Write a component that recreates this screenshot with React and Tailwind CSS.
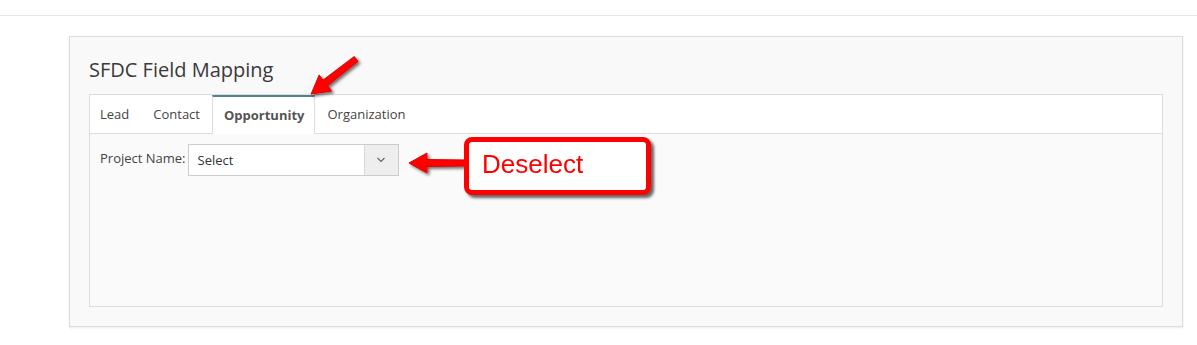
import React from "react";

function Arrow({ x, y, angle, length }) {
  const h = length - 18;
  return (
    <polygon
      transform={`translate(${x} ${y}) rotate(${angle})`}
      points={`0,-3 ${h},-3.5 ${h},-10 ${length},0 ${h},10 ${h},3.5 0,3`}
      fill="#ff0000"
      stroke="#e00000"
      strokeWidth="1"
      strokeLinejoin="round"
    />
  );
}

const tabs = ["Lead", "Contact", "Opportunity", "Organization"];

export default function App() {
  return (
    <div className="relative w-[1197px] h-[345px] bg-white overflow-hidden font-['Open_Sans',sans-serif] text-[#333]">
      <div className="h-[16px] border-b border-[#e6e6e6]" />

      <div className="ml-[69px] mt-[20px] w-[1114px] h-[291px] bg-[#f9f9f9] border border-[#dcdcdc] shadow-[0_1px_2px_rgba(0,0,0,0.08)] px-[19px] pt-[19px]">
        <h2 className="text-[20px] leading-[28px] text-[#3a3a3a] mb-[10px]">SFDC Field Mapping</h2>

        <div className="h-[213px] border border-[#dddddd] flex flex-col">
          <div className="flex h-[39px] bg-white border-b border-[#dddddd] text-[13px]">
            {tabs.map((t, i) =>
              t === "Opportunity" ? (
                <div
                  key={t}
                  className="pl-[11px] pr-[10px] flex items-center font-bold text-[#555] bg-white border-t-2 border-t-[#4f8394] border-x border-x-[#dddddd] -mb-px"
                >
                  {t}
                </div>
              ) : (
                <div
                  key={t}
                  className={`${i === 0 ? "pl-[9px] pr-[11px]" : "px-[11px]"} flex items-center text-[#444] border-t-2 border-x border-transparent`}
                >
                  {t}
                </div>
              )
            )}
          </div>
          <div className="flex-1 bg-[#fafafa] pl-[10px] pt-[10px]">
            <div className="flex items-start gap-[2px]">
              <span className="text-[13px] leading-[28px] text-[#444]">Project Name:</span>
              <div className="flex w-[211px] h-[32px] border border-[#cccccc] bg-white">
                <div className="flex-1 flex items-center pl-[9px] pt-[2px] text-[13px] text-[#333]">Select</div>
                <div className="w-[34px] bg-[#eeeeee] border-l border-[#d6d6d6] flex items-center justify-center">
                  <svg width="10" height="6" viewBox="0 0 10 6">
                    <polyline points="1.5,1 5,4.5 8.5,1" fill="none" stroke="#666" strokeWidth="1.2" />
                  </svg>
                </div>
              </div>
            </div>
          </div>
        </div>
      </div>

      <svg className="absolute left-0 top-0 pointer-events-none" width="1197" height="345">
        <defs>
          <filter id="sh" x="-20%" y="-20%" width="140%" height="140%">
            <feDropShadow dx="2" dy="2" stdDeviation="1.5" floodColor="#000" floodOpacity="0.55" />
          </filter>
        </defs>
        <g filter="url(#sh)">
          <Arrow x={356} y={59} angle={142} length={57} />
          <Arrow x={468} y={163} angle={180} length={59} />
        </g>
      </svg>

      <div className="absolute left-[464px] top-[137px] w-[187px] h-[58px] bg-white border-[5px] border-[#ff0000] rounded-[8px] shadow-[3px_3px_3px_rgba(0,0,0,0.6)] flex items-center pl-[13px]">
        <span className="font-['Liberation_Sans',Arial,sans-serif] text-[26px] leading-none text-[#ff0000] -mt-[4px]">Deselect</span>
      </div>
    </div>
  );
}
